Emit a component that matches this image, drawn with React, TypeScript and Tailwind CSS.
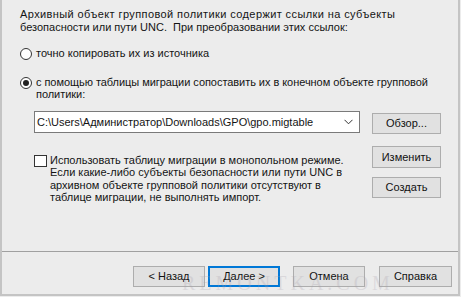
import React from "react";

function Btn({ label, className = "", def = false }: { label: string; className?: string; def?: boolean }) {
  return (
    <div
      className={
        "flex items-center justify-center bg-[#e1e1e1] text-[11px] leading-none text-[#111] " +
        (def ? "border-2 border-[#0078d7] " : "border border-[#adadad] ") +
        className
      }
    >
      {label}
    </div>
  );
}

export default function App() {
  return (
    <div
      className="relative w-[461px] h-[297px] overflow-hidden bg-[#ececec]"
      style={{ fontFamily: '"Liberation Sans", Arial, sans-serif' }}
    >
      <div className="w-[460px] h-[296px] border-l-2 border-r-2 border-b-2 border-[#c4c4c4] flex flex-col text-[11px] text-[#141414] whitespace-nowrap">
        <div className="h-[251px] flex flex-col">
          <div className="pl-[18px] pt-[8px] leading-[13px]">
            <span className="tracking-[0.4px]">Архивный объект групповой политики содержит ссылки на субъекты</span>
            <br />
            безопасности или пути UNC.&nbsp; При преобразовании этих ссылок:
          </div>

          <div className="pl-[18px] mt-[13px] flex items-center h-[13px] leading-[13px]">
            <div className="w-[12px] h-[12px] rounded-full border border-[#333] bg-white shrink-0" />
            <span className="ml-[4px]">точно копировать их из источника</span>
          </div>

          <div className="pl-[18px] mt-[16px] flex items-start leading-[12px]">
            <div className="w-[12px] h-[12px] mt-[1px] rounded-full border border-[#333] bg-white shrink-0 flex items-center justify-center">
              <div className="w-[6px] h-[6px] rounded-full bg-[#222]" />
            </div>
            <span className="ml-[4px] tracking-[-0.05px]">
              с помощью таблицы миграции сопоставить их в конечном объекте групповой
              <br />
              политики:
            </span>
          </div>

          <div className="pl-[32px] mt-[11px] flex items-start">
            <div className="w-[326px] h-[22px] bg-white border border-[#7a7a7a] flex items-center justify-between pl-[2px] pr-[6px]">
              <span className="leading-none">C:\Users\Администратор\Downloads\GPO\gpo.migtable</span>
              <svg width="9" height="6" viewBox="0 0 9 6" className="shrink-0">
                <path d="M0.5 0.8 L4.5 4.8 L8.5 0.8" fill="none" stroke="#333" strokeWidth="1" />
              </svg>
            </div>
            <Btn label="Обзор..." className="ml-[12px] mt-[2px] w-[69px] h-[21px]" />
          </div>

          <div className="pl-[32px] mt-[12px] flex items-start">
            <div className="w-[326px] pt-[8px] flex items-start leading-[12.3px]">
              <div className="w-[13px] h-[12px] border border-[#333] bg-white shrink-0 mt-[1px]" />
              <span className="ml-[3px]">
                Использовать таблицу миграции в монопольном режиме.
                <br />
                Если какие-либо субъекты безопасности или пути UNC в
                <br />
                архивном объекте групповой политики отсутствуют в
                <br />
                таблице миграции, не выполнять импорт.
              </span>
            </div>
            <div className="ml-[12px] flex flex-col gap-[9px]">
              <Btn label="Изменить" className="w-[69px] h-[22px]" />
              <Btn label="Создать" className="w-[69px] h-[21px]" />
            </div>
          </div>
        </div>

        <div className="h-px bg-[#a0a0a0] w-full" />

        <div className="mt-[14px] flex items-center pl-[131px]">
          <Btn label="< Назад" className="w-[72px] h-[21px]" />
          <Btn label="Далее >" def className="ml-[3px] w-[72px] h-[21px]" />
          <Btn label="Отмена" className="ml-[13px] w-[72px] h-[21px]" />
          <Btn label="Справка" className="ml-[14px] w-[73px] h-[21px]" />
        </div>
      </div>
      <div
        className="absolute left-[182px] top-[272px] text-[20px] leading-[22px] tracking-[4px] text-[#a8a0ac] opacity-25 pointer-events-none"
        style={{ fontFamily: '"Liberation Serif", serif' }}
      >
        REMONTKA.COM
      </div>
    </div>
  );
}
